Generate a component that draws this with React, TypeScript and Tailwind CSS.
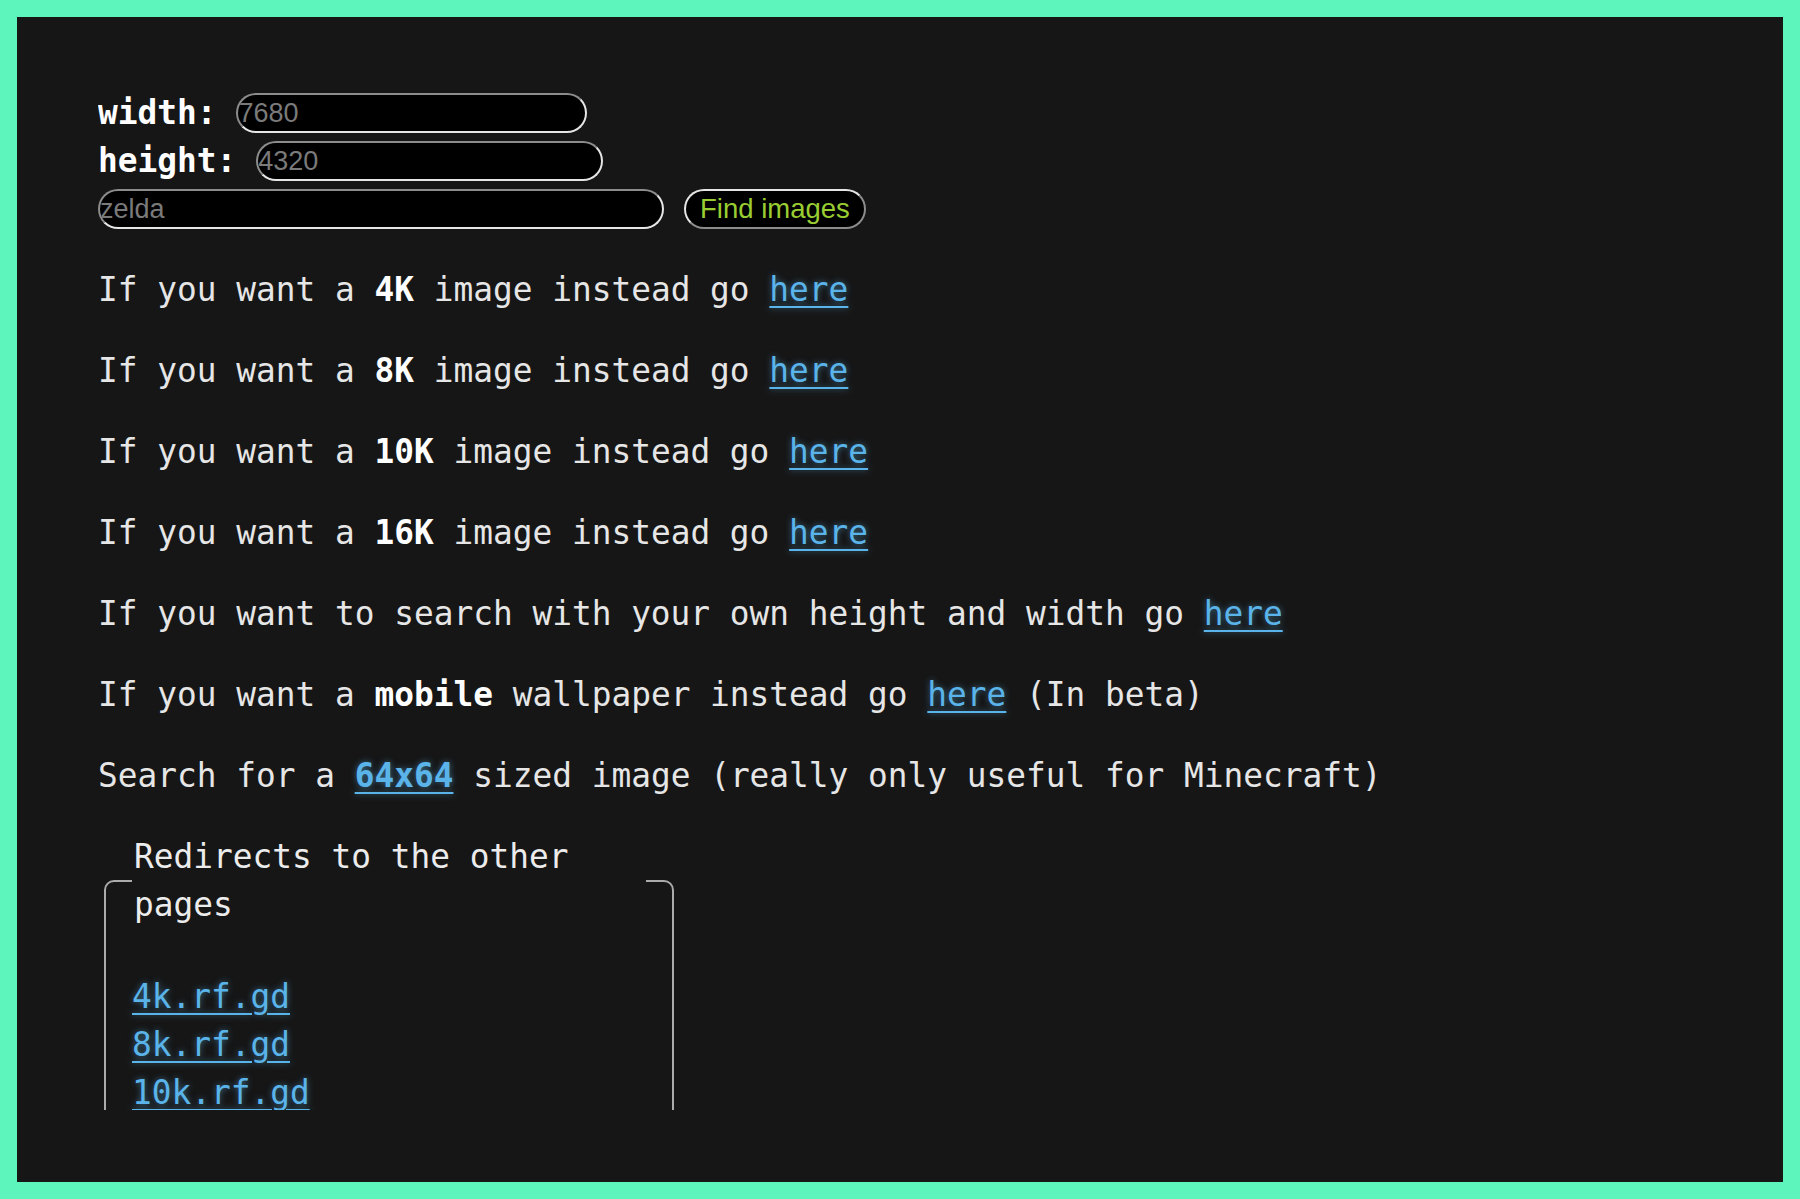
import React from "react";

type Line = {
  id: number;
  before: string;
  bold?: string;
  after: string;
  link: string;
  tail?: string;
};

const lines: Line[] = [
  { id: 1, before: "If you want a ", bold: "4K", after: " image instead go ", link: "here" },
  { id: 2, before: "If you want a ", bold: "8K", after: " image instead go ", link: "here" },
  { id: 3, before: "If you want a ", bold: "10K", after: " image instead go ", link: "here" },
  { id: 4, before: "If you want a ", bold: "16K", after: " image instead go ", link: "here" },
  { id: 5, before: "If you want to search with your own height and width go ", after: "", link: "here" },
  { id: 6, before: "If you want a ", bold: "mobile", after: " wallpaper instead go ", link: "here", tail: " (In beta)" },
];

const redirects = ["4k.rf.gd", "8k.rf.gd", "10k.rf.gd"];

const linkCls =
  "text-[#5ab4ea] underline decoration-2 underline-offset-[5px] [text-shadow:0_0_6px_rgba(90,180,234,0.55)]";

const inputCls =
  "h-[40px] rounded-full bg-black border-2 border-t-[#8c8c8c] border-l-[#8c8c8c] border-b-[#e6e6e6] border-r-[#e6e6e6] px-0 text-[27px] leading-none text-white font-['Liberation_Sans',Arial,sans-serif] placeholder:text-[#7a7a7a] outline-none";

export default function App() {
  return (
    <div className="h-screen w-full bg-[#5df5bc] p-[17px]">
      <div className="h-full bg-[#161616] py-[72px] pl-[81px] pr-[40px]">
        <div className="h-full overflow-hidden font-['DejaVu_Sans_Mono',monospace] text-[32.8px] leading-[48px] text-[#e6e6e6]">
          {/* search form */}
          <div className="flex flex-col">
            <div className="flex h-[48px] items-center">
              <span className="font-bold text-white">width: </span>
              <input className={`${inputCls} ml-[20px] w-[351px]`} placeholder="7680" />
            </div>
            <div className="flex h-[48px] items-center">
              <span className="font-bold text-white">height: </span>
              <input className={`${inputCls} ml-[20px] w-[347px]`} placeholder="4320" />
            </div>
            <div className="flex h-[48px] items-center gap-[20px]">
              <input className={`${inputCls} w-[566px]`} placeholder="zelda" />
              <button className="h-[40px] rounded-full bg-black border-2 border-t-[#e6e6e6] border-l-[#e6e6e6] border-b-[#8c8c8c] border-r-[#8c8c8c] px-[14px] text-[27.5px] leading-none text-[#9acd32] font-['Liberation_Sans',Arial,sans-serif]">
                Find images
              </button>
            </div>
          </div>

          {lines.map((line) => (
            <p key={line.id} className="my-[33px] whitespace-pre">
              {line.before}
              {line.bold && <b className="text-white">{line.bold}</b>}
              {line.after}
              <a href="#" className={linkCls}>
                {line.link}
              </a>
              {line.tail}
            </p>
          ))}

          <p className="my-[33px] whitespace-pre">
            Search for a{" "}
            <a href="#" className={`${linkCls} font-bold`}>
              64x64
            </a>{" "}
            sized image (really only useful for Minecraft)
          </p>

          <fieldset className="ml-[6px] w-[570px] rounded-[10px] border-2 border-[#ababab] px-[26px] pt-[11px] pb-[20px]">
            <legend className="px-[2px] text-[#ececec]">Redirects to the other pages</legend>
            <p className="mt-[33px]">
              {redirects.map((r) => (
                <React.Fragment key={r}>
                  <a href="#" className={linkCls}>
                    {r}
                  </a>
                  <br />
                </React.Fragment>
              ))}
            </p>
          </fieldset>
        </div>
      </div>
    </div>
  );
}
